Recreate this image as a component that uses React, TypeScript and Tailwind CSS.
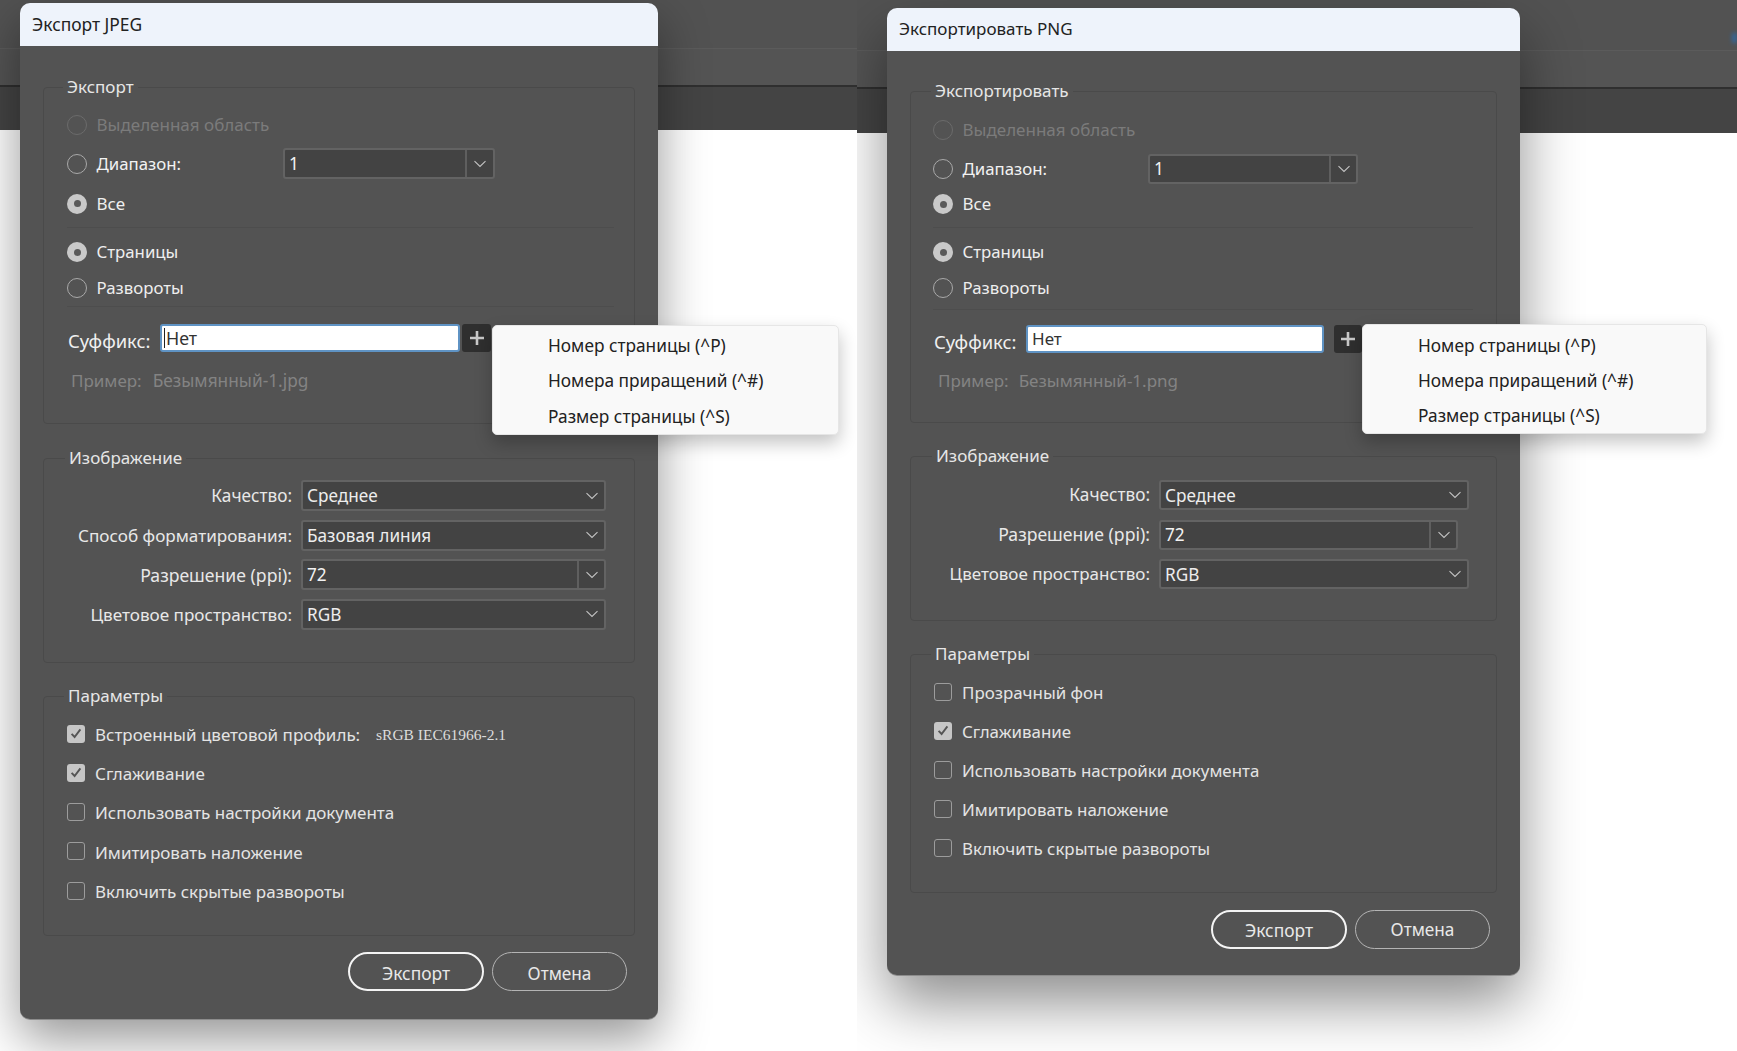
import React from "react";

const Chevron = () => (
  <svg width="14" height="8" viewBox="0 0 14 8" fill="none" className="shrink-0">
    <path d="M1.5 1.2 7 6.5l5.5-5.3" stroke="#c4c4c4" strokeWidth="1.1" />
  </svg>
);

function Radio({ state }: { state: "off" | "on" | "disabled" }) {
  if (state === "on")
    return (
      <span className="flex h-[20px] w-[20px] shrink-0 items-center justify-center rounded-full bg-[#c9c9c9]">
        <span className="h-[7px] w-[7px] rounded-full bg-[#5a5a5a]" />
      </span>
    );
  if (state === "disabled")
    return <span className="h-[20px] w-[20px] shrink-0 rounded-full border-[1.5px] border-[#6b6b6b]" />;
  return <span className="h-[20px] w-[20px] shrink-0 rounded-full border-[1.5px] border-[#a9a9a9]" />;
}

function Check({ on }: { on?: boolean }) {
  if (on)
    return (
      <span className="flex h-[18px] w-[18px] shrink-0 items-center justify-center rounded-[3px] bg-[#c6c6c6]">
        <svg width="12" height="11" viewBox="0 0 12 11" fill="none">
          <path d="M1.6 5.8 4.6 9 10.4 1.4" stroke="#555555" strokeWidth="1.9" />
        </svg>
      </span>
    );
  return <span className="h-[18px] w-[18px] shrink-0 rounded-[3px] border-[1.5px] border-[#9c9c9c]" />;
}

function Select({ children, className }: { children: React.ReactNode; className: string }) {
  return (
    <div className={"flex items-center rounded-[3px] border-2 border-[#636363] bg-[#434343] pl-[4px] pr-[5px] text-[17.2px] text-[#ededed] " + className}>
      <span className="flex-1 pt-[1px]">{children}</span>
      <Chevron />
    </div>
  );
}

function Combo({ children, className, btn }: { children: React.ReactNode; className: string; btn: string }) {
  return (
    <div className={"flex items-stretch rounded-[3px] border-2 border-[#636363] bg-[#434343] text-[17.2px] text-[#f2f2f2] " + className}>
      <span className="flex flex-1 items-center pl-[4px]">{children}</span>
      <span className={"flex items-center justify-center border-l-2 border-[#5f5f5f] " + btn}>
        <Chevron />
      </span>
    </div>
  );
}

function Group({ title, className, titleClass, children }: { title: string; className: string; titleClass: string; children: React.ReactNode }) {
  return (
    <div className={"relative rounded-[4px] border border-[#4a4a4a] " + className}>
      <span className={"absolute -top-[13px] bg-[#535353] px-[4px] leading-[24px] text-[#e6e6e6] " + titleClass}>{title}</span>
      {children}
    </div>
  );
}

function RadioRow({ state, label, className, children }: { state: "off" | "on" | "disabled"; label: string; className: string; children?: React.ReactNode }) {
  return (
    <div className={"flex items-center gap-[9.5px] " + className}>
      <Radio state={state} />
      <span className={state === "disabled" ? "text-[#7b7b7b]" : "text-[#eeeeee]"}>{label}</span>
      {children}
    </div>
  );
}

function CheckRow({ on, label, extra, rowClass }: { on?: boolean; label: string; extra?: string; rowClass: string }) {
  return (
    <div className={"flex items-center gap-[10px] " + rowClass}>
      <Check on={on} />
      <span className="pt-[2px] text-[#e4e4e4]">{label}</span>
      {extra && <span className="ml-[6px] pt-[2px] font-['Liberation_Serif',serif] text-[15.5px] text-[#dcdcdc]">{extra}</span>}
    </div>
  );
}

const Plus = () => (
  <svg width="16" height="16" viewBox="0 0 16 16" fill="none">
    <path d="M8 1v14M1 8h14" stroke="#c9c9c9" strokeWidth="2.6" />
  </svg>
);

function Popup({ className, row }: { className: string; row: string }) {
  return (
    <div className={"absolute flex h-[110px] flex-col rounded-[5px] border border-[#e6e6e6] bg-[#f9f9f9] pl-[55px] text-[17.3px] text-[#222222] shadow-[0_8px_18px_rgba(0,0,0,0.24)] " + className}>
      <span className={"flex shrink-0 items-center " + row}>Номер страницы (^P)</span>
      <span className={"flex shrink-0 items-center " + row}>Номера приращений (^#)</span>
      <span className={"flex shrink-0 items-center " + row}>Размер страницы (^S)</span>
    </div>
  );
}

function Buttons({ className, textClass }: { className: string; textClass: string }) {
  return (
    <div className={"flex justify-end gap-[8px] " + className}>
      <button className={"h-[39px] w-[136px] rounded-[20px] border-[2.5px] border-[#f4f4f4] text-[17.4px] text-[#e8e8e8] " + textClass}>Экспорт</button>
      <button className={"h-[39px] w-[135px] rounded-[20px] border-[1.5px] border-[#b4b4b4] text-[17.2px] text-[#e8e8e8] " + textClass}>Отмена</button>
    </div>
  );
}

function Strip({ bottom, line, dark }: { bottom: string; line: string; dark: string }) {
  return (
    <div className="flex flex-col">
      <div className={"bg-[#525252] " + line} />
      <div className="h-[1px] bg-[#5b5b5b]" />
      <div className={"bg-[#545454] " + dark} />
      <div className="h-[2px] bg-[#2f2f2f]" />
      <div className={"bg-[#444444] " + bottom} />
    </div>
  );
}

function JpegDialog() {
  const rowClass = "h-[39.25px]";
  return (
    <div className="absolute left-[20px] top-[3px] flex h-[1016px] w-[638px] flex-col rounded-[10px] bg-[#535353] shadow-[0_1px_0_#8c8c8c,0_20px_50px_rgba(0,0,0,0.42)]">
      <div className="flex h-[43px] items-center rounded-t-[10px] bg-[#eef3fb] pl-[12px] text-[17.4px] text-[#222222]">Экспорт JPEG</div>
      <div className="flex flex-col px-[23px] pt-[41px]">
        <Group title="Экспорт" className="h-[337px] pl-[23px] pr-[20px] pt-[17px]" titleClass="left-[19px]">
          <RadioRow state="disabled" label="Выделенная область" className="h-[39px]" />
          <div className="flex h-[39px] items-center">
            <div className="flex w-[216px] items-center gap-[9.5px]">
              <Radio state="off" />
              <span className="text-[16.8px] text-[#f2f2f2]">Диапазон:</span>
            </div>
            <Combo className="h-[31px] w-[212px]" btn="w-[28px]">1</Combo>
          </div>
          <RadioRow state="on" label="Все" className="h-[41px]" />
          <div className="mt-[3px] h-px bg-[#4d4d4d]" />
          <RadioRow state="on" label="Страницы" className="mt-[6px] h-[36px] text-[16.8px]" />
          <RadioRow state="off" label="Развороты" className="h-[36px] text-[16.8px]" />
          <div className="h-px bg-[#4d4d4d]" />
          <div className="mt-[17px] flex h-[28px] items-center pl-[1px]">
            <span className="w-[92px] pt-[5px] text-[18.4px] text-[#f0f0f0]">Суффикс:</span>
            <div className="flex h-[28px] w-[300px] items-center rounded-[3px] border-2 border-[#5f93c4] bg-white pl-[2px] text-[17.8px] text-[#333333]">
              <span className="mr-[1px] h-[20px] w-px bg-[#222222]" />
              Нет
            </div>
            <span className="ml-[2px] flex h-[28px] w-[29px] items-center justify-center rounded-[3px] bg-[#2f2f2f]">
              <Plus />
            </span>
          </div>
          <div className="ml-[4px] mt-[19px] flex h-[20px] items-center gap-[11px] text-[#838383]">
            <span>Пример:</span>
            <span className="text-[17.3px]">Безымянный-1.jpg</span>
          </div>
        </Group>
        <Group title="Изображение" className="mt-[34px] flex h-[205px] flex-col gap-[8.5px] pt-[21px]" titleClass="left-[21px]">
          <div className="flex h-[31px] items-center">
            <span className="w-[248px] pt-[1px] text-right text-[17.2px] text-[#e8e8e8]">Качество:</span>
            <Select className="ml-[9px] h-[31px] w-[305px]">Среднее</Select>
          </div>
          <div className="flex h-[31px] items-center">
            <span className="w-[248px] pt-[1px] text-right text-[17.1px] text-[#e8e8e8]">Способ форматирования:</span>
            <Select className="ml-[9px] h-[31px] w-[305px]">Базовая линия</Select>
          </div>
          <div className="flex h-[31px] items-center">
            <span className="w-[248px] pt-[1px] text-right text-[17.6px] text-[#e8e8e8]">Разрешение (ppi):</span>
            <Combo className="ml-[9px] h-[31px] w-[305px]" btn="w-[27px]">72</Combo>
          </div>
          <div className="flex h-[31px] items-center">
            <span className="w-[248px] pt-[1px] text-right text-[17.1px] text-[#e8e8e8]">Цветовое пространство:</span>
            <Select className="ml-[9px] h-[31px] w-[305px]">RGB</Select>
          </div>
        </Group>
        <Group title="Параметры" className="mt-[33px] h-[240px] pl-[23px] pt-[17px]" titleClass="left-[20px]">
          <CheckRow rowClass={rowClass} on label="Встроенный цветовой профиль:" extra="sRGB IEC61966-2.1" />
          <CheckRow rowClass={rowClass} on label="Сглаживание" />
          <CheckRow rowClass={rowClass} label="Использовать настройки документа" />
          <CheckRow rowClass={rowClass} label="Имитировать наложение" />
          <CheckRow rowClass={rowClass} label="Включить скрытые развороты" />
        </Group>
        <div className="mt-[16px]">
          <Buttons className="pr-[8px]" textClass="pt-[4px]" />
        </div>
      </div>
      <Popup className="left-[472px] top-[322px] w-[347px] pt-[2px]" row="h-[35.5px]" />
    </div>
  );
}

function PngDialog() {
  const rowClass = "h-[39px]";
  return (
    <div className="absolute left-[30px] top-[8px] flex h-[967px] w-[633px] flex-col rounded-[10px] bg-[#535353] shadow-[0_1px_0_#8c8c8c,0_28px_60px_rgba(0,0,0,0.45)]">
      <div className="flex h-[43px] items-center rounded-t-[10px] bg-[#eef3fb] pb-[1px] pl-[12px] text-[#222222]">Экспортировать PNG</div>
      <div className="flex flex-col px-[23px] pt-[40px]">
        <Group title="Экспортировать" className="h-[332px] pl-[22px] pr-[23px] pt-[18px]" titleClass="left-[20px]">
          <RadioRow state="disabled" label="Выделенная область" className="h-[39px]" />
          <div className="flex h-[39px] items-center">
            <div className="flex w-[215px] items-center gap-[9.5px]">
              <Radio state="off" />
              <span className="text-[16.8px] text-[#f2f2f2]">Диапазон:</span>
            </div>
            <Combo className="h-[30px] w-[210px]" btn="w-[27px]">1</Combo>
          </div>
          <RadioRow state="on" label="Все" className="h-[32px]" />
          <div className="mt-[7px] h-px bg-[#4d4d4d]" />
          <RadioRow state="on" label="Страницы" className="mt-[6px] h-[36px] text-[16.8px]" />
          <RadioRow state="off" label="Развороты" className="h-[36px] text-[16.8px]" />
          <div className="mt-[3px] h-px bg-[#4d4d4d]" />
          <div className="mt-[15px] flex h-[28px] items-center pl-[1px]">
            <span className="w-[92px] pt-[5px] text-[18.4px] text-[#f0f0f0]">Суффикс:</span>
            <div className="flex h-[28px] w-[298px] items-center rounded-[3px] border-2 border-[#5f93c4] bg-white pl-[4px] text-[#333333]">Нет</div>
            <span className="ml-[10px] flex h-[28px] w-[28px] items-center justify-center rounded-[3px] bg-[#2f2f2f]">
              <Plus />
            </span>
          </div>
          <div className="ml-[5px] mt-[18px] flex h-[20px] items-center gap-[10px] text-[#838383]">
            <span>Пример:</span>
            <span>Безымянный-1.png</span>
          </div>
        </Group>
        <Group title="Изображение" className="mt-[33px] flex h-[165px] flex-col gap-[9.5px] pt-[23px]" titleClass="left-[21px]">
          <div className="flex h-[30px] items-center">
            <span className="w-[239px] text-right text-[17.2px] text-[#e8e8e8]">Качество:</span>
            <Select className="ml-[9px] h-[30px] w-[310px]">Среднее</Select>
          </div>
          <div className="flex h-[30px] items-center">
            <span className="w-[239px] text-right text-[17.6px] text-[#e8e8e8]">Разрешение (ppi):</span>
            <Combo className="ml-[9px] h-[30px] w-[299px]" btn="w-[27px]">72</Combo>
          </div>
          <div className="flex h-[30px] items-center">
            <span className="w-[239px] text-right text-[#e8e8e8]">Цветовое пространство:</span>
            <Select className="ml-[9px] h-[30px] w-[310px]">RGB</Select>
          </div>
        </Group>
        <Group title="Параметры" className="mt-[33px] h-[239px] pl-[23px] pt-[17px] text-[16.9px]" titleClass="left-[20px] text-[17px]">
          <CheckRow rowClass={rowClass} label="Прозрачный фон" />
          <CheckRow rowClass={rowClass} on label="Сглаживание" />
          <CheckRow rowClass={rowClass} label="Использовать настройки документа" />
          <CheckRow rowClass={rowClass} label="Имитировать наложение" />
          <CheckRow rowClass={rowClass} label="Включить скрытые развороты" />
        </Group>
        <div className="mt-[17px]">
          <Buttons className="pr-[7px]" textClass="pt-[1px]" />
        </div>
      </div>
      <Popup className="left-[475px] top-[316px] w-[345px] pt-[3px]" row="h-[35px]" />
    </div>
  );
}

export default function App() {
  return (
    <div className="flex h-[1051px] w-[1737px] overflow-hidden bg-white font-['Noto_Sans',sans-serif] text-[17px]">
      <div className="relative h-full w-[857px] overflow-hidden">
        <Strip line="h-[48px]" dark="h-[36px]" bottom="h-[43px]" />
        <JpegDialog />
      </div>
      <div className="relative h-full w-[880px] overflow-hidden">
        <Strip line="h-[50px]" dark="h-[36px]" bottom="h-[44px]" />
        <span className="absolute right-0 top-[33px] h-[10px] w-[5px] bg-[#2a70b8] opacity-70 blur-[2px]" />
        <PngDialog />
      </div>
    </div>
  );
}
